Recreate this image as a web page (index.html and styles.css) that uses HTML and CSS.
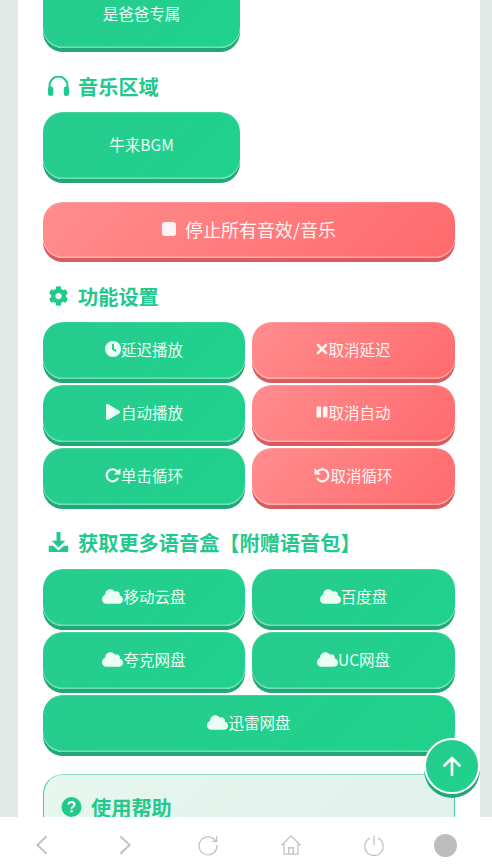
FILE: index.html
```html
<!DOCTYPE html>
<html lang="zh-CN">
<head>
    <meta charset="UTF-8">
    <meta name="viewport" content="width=device-width, initial-scale=1.0">
    <title>语音盒</title>
    <link rel="stylesheet" href="styles.css">
</head>
<body>
    <div class="screen">
        <div class="page">
            <div class="panel">
                <div class="row-single">
                    <div class="btn btn-tall">是爸爸专属</div>
                </div>

                <h2 class="title title-music">
                    <svg class="title-icon" viewBox="2 3 20 19"><path d="M3.500 15v-3a8.500 8.500 0 0 1 17 0v3" fill="none" stroke="currentColor" stroke-width="2"/><rect x="2" y="13" width="5" height="9" rx="2.400" fill="currentColor"/><rect x="17" y="13" width="5" height="9" rx="2.400" fill="currentColor"/></svg>
                    音乐区域
                </h2>
                <div class="row-single">
                    <div class="btn btn-tall">牛来BGM</div>
                </div>

                <div class="btn btn-red btn-stop">
                    <svg class="stop-icon" viewBox="0 0 14 14"><rect width="14" height="14" rx="3" fill="currentColor"/></svg>
                    停止所有音效/音乐
                </div>

                <h2 class="title title-settings">
                    <svg class="title-icon" viewBox="0 0 512 512"><path fill="currentColor" d="M487.4 315.7l-42.6-24.6c4.3-23.2 4.3-47 0-70.2l42.6-24.6c4.9-2.8 7.1-8.6 5.5-14-11.1-35.6-30-67.8-54.7-94.6-3.8-4.1-10-5.1-14.8-2.3L380.8 110c-17.9-15.4-38.5-27.3-60.8-35.1V25.8c0-5.6-3.9-10.5-9.4-11.7-36.7-8.2-74.3-7.8-109.2 0-5.5 1.2-9.4 6.1-9.4 11.7V75c-22.2 7.9-42.8 19.8-60.8 35.1L88.7 85.5c-4.9-2.8-11-1.9-14.8 2.3-24.7 26.7-43.6 58.9-54.7 94.6-1.7 5.4.6 11.2 5.5 14L67.3 221c-4.3 23.2-4.3 47 0 70.2l-42.6 24.6c-4.9 2.8-7.1 8.6-5.5 14 11.1 35.6 30 67.8 54.7 94.6 3.8 4.1 10 5.1 14.8 2.3l42.6-24.6c17.9 15.4 38.5 27.3 60.8 35.1v49.2c0 5.6 3.9 10.5 9.4 11.7 36.7 8.2 74.3 7.8 109.2 0 5.5-1.2 9.4-6.1 9.4-11.7v-49.2c22.2-7.9 42.8-19.8 60.8-35.1l42.6 24.6c4.9 2.8 11 1.9 14.8-2.3 24.7-26.7 43.6-58.9 54.7-94.6 1.5-5.5-.7-11.3-5.6-14.1zM256 336c-44.1 0-80-35.9-80-80s35.9-80 80-80 80 35.9 80 80-35.9 80-80 80z"/></svg>
                    功能设置
                </h2>
                <div class="grid">
                    <div class="btn">
                        <svg class="icon" viewBox="0 0 16 16"><path fill="currentColor" fill-rule="evenodd" d="M8 0a8 8 0 1 1 0 16A8 8 0 0 1 8 0zM7 3v5.600l3.600 2.400 1-1.500L9 7.800V3z"/></svg>延迟播放
                    </div>
                    <div class="btn btn-red">
                        <svg class="icon icon-small" viewBox="0 0 12 12"><path d="M2 2l8 8M10 2l-8 8" fill="none" stroke="currentColor" stroke-width="2.6" stroke-linecap="round"/></svg>取消延迟
                    </div>
                    <div class="btn">
                        <svg class="icon" viewBox="0 0 448 512"><path fill="currentColor" d="M424.4 214.7L72.4 6.6C43.8-10.3 0 6.1 0 47.9V464c0 37.5 40.7 60.1 72.4 41.3l352-208c31.4-18.5 31.5-64.1 0-82.6z"/></svg>自动播放
                    </div>
                    <div class="btn btn-red">
                        <svg class="icon icon-small" viewBox="0 0 11 12"><rect x="0" y="0.5" width="4.600" height="11" rx="1.200" fill="currentColor"/><rect x="6.400" y="0.5" width="4.600" height="11" rx="1.200" fill="currentColor"/></svg>取消自动
                    </div>
                    <div class="btn">
                        <svg class="icon" viewBox="0 0 16 16"><path d="M13 11a6 6 0 1 1-.6-6.400" fill="none" stroke="currentColor" stroke-width="2.200"/><path fill="currentColor" d="M15.500 1v6.400H9z"/></svg>单击循环
                    </div>
                    <div class="btn btn-red">
                        <svg class="icon" viewBox="0 0 16 16"><path d="M3 11a6 6 0 1 0 .6-6.400" fill="none" stroke="currentColor" stroke-width="2.200"/><path fill="currentColor" d="M.5 1v6.400H7z"/></svg>取消循环
                    </div>
                </div>

                <h2 class="title title-download">
                    <svg class="title-icon" viewBox="2 2 20 20.500"><path fill="currentColor" d="M10 2h4v9h5l-7 7-7-7h5z"/><path fill="currentColor" d="M2 16h4.500l5.500 5 5.500-5H22v6.500H2z"/></svg>
                    获取更多语音盒【附赠语音包】
                </h2>
                <div class="grid">
                    <div class="btn">
                        <svg class="icon icon-cloud" viewBox="0 0 640 512"><path fill="currentColor" d="M537.6 226.6c4.1-10.7 6.4-22.4 6.4-34.6 0-53-43-96-96-96-19.7 0-38.1 6-53.3 16.2C367 64.2 315.3 32 256 32c-88.4 0-160 71.6-160 160 0 2.7.1 5.4.2 8.1C40.2 219.8 0 273.2 0 336c0 79.5 64.5 144 144 144h368c70.7 0 128-57.3 128-128 0-61.9-44-113.6-102.4-125.4z"/></svg>移动云盘
                    </div>
                    <div class="btn">
                        <svg class="icon icon-cloud" viewBox="0 0 640 512"><path fill="currentColor" d="M537.6 226.6c4.1-10.7 6.4-22.4 6.4-34.6 0-53-43-96-96-96-19.7 0-38.1 6-53.3 16.2C367 64.2 315.3 32 256 32c-88.4 0-160 71.6-160 160 0 2.7.1 5.4.2 8.1C40.2 219.8 0 273.2 0 336c0 79.5 64.5 144 144 144h368c70.7 0 128-57.3 128-128 0-61.9-44-113.6-102.4-125.4z"/></svg>百度盘
                    </div>
                    <div class="btn">
                        <svg class="icon icon-cloud" viewBox="0 0 640 512"><path fill="currentColor" d="M537.6 226.6c4.1-10.7 6.4-22.4 6.4-34.6 0-53-43-96-96-96-19.7 0-38.1 6-53.3 16.2C367 64.2 315.3 32 256 32c-88.4 0-160 71.6-160 160 0 2.7.1 5.4.2 8.1C40.2 219.8 0 273.2 0 336c0 79.5 64.5 144 144 144h368c70.7 0 128-57.3 128-128 0-61.9-44-113.6-102.4-125.4z"/></svg>夸克网盘
                    </div>
                    <div class="btn">
                        <svg class="icon icon-cloud" viewBox="0 0 640 512"><path fill="currentColor" d="M537.6 226.6c4.1-10.7 6.4-22.4 6.4-34.6 0-53-43-96-96-96-19.7 0-38.1 6-53.3 16.2C367 64.2 315.3 32 256 32c-88.4 0-160 71.6-160 160 0 2.7.1 5.4.2 8.1C40.2 219.8 0 273.2 0 336c0 79.5 64.5 144 144 144h368c70.7 0 128-57.3 128-128 0-61.9-44-113.6-102.4-125.4z"/></svg>UC网盘
                    </div>
                    <div class="btn btn-wide">
                        <svg class="icon icon-cloud" viewBox="0 0 640 512"><path fill="currentColor" d="M537.6 226.6c4.1-10.7 6.4-22.4 6.4-34.6 0-53-43-96-96-96-19.7 0-38.1 6-53.3 16.2C367 64.2 315.3 32 256 32c-88.4 0-160 71.6-160 160 0 2.7.1 5.4.2 8.1C40.2 219.8 0 273.2 0 336c0 79.5 64.5 144 144 144h368c70.7 0 128-57.3 128-128 0-61.9-44-113.6-102.4-125.4z"/></svg>迅雷网盘
                    </div>
                </div>

                <div class="help">
                    <h2 class="title title-help">
                        <svg class="title-icon" viewBox="0 0 20 20"><circle cx="10" cy="10" r="10" fill="currentColor"/><path d="M7 7.600C7 5.800 8.400 5 10 5s3 .9 3 2.500c0 2.200-3 2.200-3 4.300" fill="none" stroke="#fff" stroke-width="2"/><rect x="8.900" y="13.200" width="2.200" height="2.200" fill="#fff"/></svg>
                        使用帮助
                    </h2>
                </div>
            </div>

            <div class="to-top">
                <svg viewBox="0 0 24 24"><path d="M12 21V4M4.500 11.500L12 4l7.500 7.500" fill="none" stroke="currentColor" stroke-width="2.600" stroke-linecap="round" stroke-linejoin="round"/></svg>
            </div>
        </div>

        <div class="bar">
            <div class="bar-item bar-arrow"><svg viewBox="0 0 24 24"><path d="M17 2.500L7 12l10 9.500"/></svg></div>
            <div class="bar-item bar-arrow"><svg viewBox="0 0 24 24"><path d="M7 2.500L17 12 7 21.500"/></svg></div>
            <div class="bar-item"><svg viewBox="0 0 24 24"><path d="M20.500 8A9.800 9.800 0 1 0 21.800 12M21.500 2.500V8H16"/></svg></div>
            <div class="bar-item"><svg viewBox="0 0 24 24"><path d="M1.500 12.500L12 2l10.500 10.500M4.500 10.500V22h15V10.500M9.500 22v-7h5v7"/></svg></div>
            <div class="bar-item"><svg viewBox="0 0 24 24"><path d="M7.500 4.500a10 10 0 1 0 9 0M12 1.500v10.500"/></svg></div>
            <div class="bar-item bar-last"><span class="avatar"></span></div>
        </div>
    </div>
</body>
</html>
```

FILE: styles.css
```css
*{
    box-sizing: border-box;
}

body{
    margin: 0;
    padding: 0;

    background-color: #e2eae7;

    font-family: "Noto Sans CJK SC", "Noto Sans", sans-serif;
}

.screen{
    display: flex;
    flex-direction: column;

    height: 866px;

    overflow: hidden;
}

.page{
    position: relative;

    flex: 1;
    min-height: 0;

    padding: 0 12px 0 18px;

    overflow: hidden;
}

.panel{
    margin-top: -19px;
    padding: 0 25px;

    background-color: #fff;
}

.btn{
    display: flex;
    align-items: center;
    justify-content: center;

    height: 57px;
    padding-bottom: 3px;

    border-radius: 20px;

    background: linear-gradient(135deg, #27cb8f, #1fd28c);
    box-shadow: 0 4px 0 #22a877, inset 0 -1.5px 0 rgba(255, 255, 255, 0.35), inset 0 1px 0 rgba(255, 255, 255, 0.12);

    color: #ecfdf6;
    font-size: 15.5px;
    white-space: nowrap;
}

.btn-red{
    background: linear-gradient(135deg, #ff8d8f, #ff6a6c);
    box-shadow: 0 4px 0 #d95b5d, inset 0 -1.5px 0 rgba(255, 255, 255, 0.35), inset 0 1px 0 rgba(255, 255, 255, 0.12);

    color: #fff3f3;
}

.btn-tall{
    height: 67px;
}

.btn-wide{
    grid-column: 1 / 3;
}

.btn-stop{
    gap: 9px;

    height: 56px;
    margin-top: 23px;

    font-size: 18px;
}

.row-single{
    width: 197px;
}

.grid{
    display: grid;
    grid-template-columns: 202px 203px;
    gap: 6px 7px;
}

.title{
    display: flex;
    align-items: center;
    gap: 9px;

    height: 24px;
    margin: 0 0 0 5px;

    color: #22c98c;
    font-size: 20.2px;
    font-weight: 700;
    white-space: nowrap;
}

.title-music{
    margin-top: 26px;
    margin-bottom: 14px;
}

.title-settings{
    margin-top: 26px;
    margin-bottom: 14px;
}

.title-download{
    margin-top: 25px;
    margin-bottom: 15px;
}

.title-help{
    margin: 0;
}

.title-icon{
    width: 21px;
    height: 20px;
}

.icon{
    width: 16px;
    height: 16px;
}

.icon-small{
    width: 12px;
    height: 12px;
}

.icon-cloud{
    width: 21px;
    height: 17px;
}

.stop-icon{
    width: 14px;
    height: 14px;
}

.help{
    height: 90px;
    margin-top: 22px;
    padding: 20px 17px;

    border: 1px solid #45cb9b;
    border-top-color: #8fe0c2;
    border-radius: 20px;

    background: linear-gradient(135deg, #e6f7f0, #dff1ea);
}

.to-top{
    position: absolute;
    top: 738px;
    right: 12px;

    display: flex;
    align-items: center;
    justify-content: center;

    width: 56px;
    height: 56px;

    border: 2px solid #fff;
    border-radius: 50%;

    background: linear-gradient(135deg, #27cb8f, #1fd28c);
    box-shadow: 0 4px 0 #22a877;

    color: #fff;
}

.to-top svg{
    width: 24px;
    height: 24px;
}

.bar{
    display: flex;
    align-items: center;
    flex-shrink: 0;

    height: 49px;
    padding-top: 7px;

    background-color: #fff;
}

.bar-item{
    display: flex;
    align-items: center;
    justify-content: center;

    width: 83px;
}

.bar-item svg{
    width: 22px;
    height: 22px;

    fill: none;
    stroke: #c2c2c2;
    stroke-width: 1.4;
}

.bar-arrow svg{
    stroke-width: 2.2;
}

.bar-last{
    width: 60px;
}

.avatar{
    width: 23px;
    height: 23px;

    border-radius: 50%;

    background-color: #bdbdbd;
}
```
